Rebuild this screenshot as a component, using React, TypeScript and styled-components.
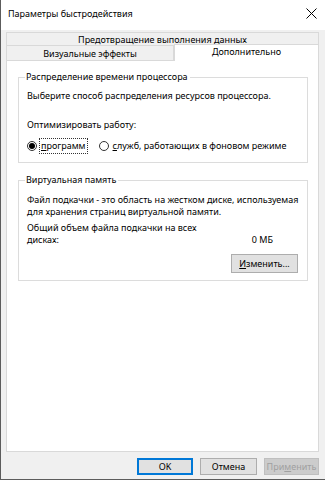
import React from "react";
import styled, { createGlobalStyle } from "styled-components";

const Global = createGlobalStyle`
  html, body { margin: 0; padding: 0; background: #f0f0f0; }
  body { font-family: "Noto Sans", sans-serif; font-size: 9px; color: #000; }
  * { box-sizing: border-box; }
`;

const Window = styled.div`
  width: 325px;
  height: 480px;
  background: #f0f0f0;
  border-left: 1px solid #5c5c5c;
  border-bottom: 1px solid #5c5c5c;
  display: flex;
  flex-direction: column;
  overflow: hidden;
`;

const TitleBar = styled.div`
  height: 30px;
  background: #fff;
  display: flex;
  align-items: center;
  justify-content: space-between;
  padding: 0 8px 4px 7px;
  font-size: 9px;
`;

const Body = styled.div`
  flex: 1;
  display: flex;
  flex-direction: column;
  padding: 2px 6px 0 5px;
`;

const TabTopRow = styled.div`
  height: 13px;
  border: 1px solid #d9d9d9;
  border-bottom: none;
  display: flex;
  align-items: center;
  justify-content: center;
  background: #f0f0f0;
  line-height: 1;
`;

const TabRow = styled.div`
  display: flex;
  height: 16px;
`;

const Tab = styled.div<{ $active?: boolean; $w: number }>`
  width: ${(p) => p.$w}px;
  border: 1px solid #d9d9d9;
  border-bottom: ${(p) => (p.$active ? "none" : "1px solid #d9d9d9")};
  background: ${(p) => (p.$active ? "#fff" : "#f0f0f0")};
  display: flex;
  align-items: center;
  justify-content: center;
  padding-bottom: ${(p) => (p.$active ? "3px" : "0")};
  margin-top: ${(p) => (p.$active ? "-1px" : "0")};
  height: ${(p) => (p.$active ? "17px" : "16px")};
  flex: ${(p) => (p.$active ? "1" : "none")};
  position: relative;
  z-index: ${(p) => (p.$active ? 1 : 0)};
`;

const Panel = styled.div`
  height: 391px;
  background: #fff;
  border: 1px solid #d9d9d9;
  border-top: none;
  padding: 10px 10px 0 11px;
  display: flex;
  flex-direction: column;
  gap: 11px;
  min-width: 0;
`;

const Group = styled.fieldset<{ $h: number }>`
  margin: 0;
  min-width: 0;
  border: 1px solid #dcdcdc;
  padding: 3px 8px 0 8px;
  height: ${(p) => p.$h}px;
  display: flex;
  flex-direction: column;
`;

const Legend = styled.legend`
  padding: 0 2px 0 1px;
  margin-left: -2px;
  line-height: 12px;
`;

const Text = styled.div<{ $mt?: number }>`
  margin-top: ${(p) => p.$mt ?? 0}px;
  line-height: 12px;
  white-space: nowrap;
`;

const RadioRow = styled.div`
  margin-top: 7px;
  display: flex;
  align-items: center;
  height: 15px;
`;

const RadioItem = styled.label<{ $ml?: number }>`
  display: flex;
  align-items: center;
  margin-left: ${(p) => p.$ml ?? 0}px;
`;

const RadioCircle = styled.span<{ $checked?: boolean }>`
  width: 10px;
  height: 10px;
  border-radius: 50%;
  border: 1px solid #333;
  display: flex;
  align-items: center;
  justify-content: center;
  margin-right: 3px;
  &::after {
    content: "";
    width: 6px;
    height: 6px;
    border-radius: 50%;
    background: ${(p) => (p.$checked ? "#000" : "transparent")};
  }
`;

const RadioLabel = styled.span<{ $focus?: boolean }>`
  outline: ${(p) => (p.$focus ? "1px dotted #333" : "none")};
  padding: 1px 1px;
  line-height: 12px;
  white-space: nowrap;
`;

const U = styled.span`
  text-decoration: underline;
`;

const SizeRow = styled.div`
  display: flex;
  justify-content: space-between;
  padding-right: 26px;
  line-height: 12px;
`;

const ButtonRight = styled.div`
  display: flex;
  justify-content: flex-end;
  margin-top: 8px;
  padding-right: 1px;
`;

const Button = styled.div<{ $w: number; $h?: number; $primary?: boolean; $disabled?: boolean }>`
  width: ${(p) => p.$w}px;
  height: ${(p) => p.$h ?? 18}px;
  display: flex;
  align-items: center;
  justify-content: center;
  background: ${(p) => (p.$disabled ? "#cccccc" : "#e1e1e1")};
  border: 1px solid ${(p) => (p.$primary ? "#0078d7" : p.$disabled ? "#bfbfbf" : "#adadad")};
  box-shadow: ${(p) => (p.$primary ? "inset 0 0 0 1px #0078d7" : "none")};
  color: ${(p) => (p.$disabled ? "#a0a0a0" : "#000")};
  line-height: 1;
`;

const Footer = styled.div`
  display: flex;
  justify-content: flex-end;
  gap: 7px;
  margin-top: 6px;
`;

const CloseIcon = () => (
  <svg width="11" height="11" viewBox="0 0 11 11">
    <path d="M0.5 0.5 L10.5 10.5 M10.5 0.5 L0.5 10.5" stroke="#000" strokeWidth="1" fill="none" />
  </svg>
);

export default function App() {
  return (
    <>
      <Global />
      <Window>
        <TitleBar>
          <span>Параметры быстродействия</span>
          <CloseIcon />
        </TitleBar>
        <Body>
          <TabTopRow>Предотвращение выполнения данных</TabTopRow>
          <TabRow>
            <Tab $w={168}>Визуальные эффекты</Tab>
            <Tab $w={145} $active>
              Дополнительно
            </Tab>
          </TabRow>
          <Panel>
            <Group $h={92}>
              <Legend>Распределение времени процессора</Legend>
              <Text $mt={4}>Выберите способ распределения ресурсов процессора.</Text>
              <Text $mt={17}>Оптимизировать работу:</Text>
              <RadioRow>
                <RadioItem>
                  <RadioCircle $checked />
                  <RadioLabel $focus>
                    <U>п</U>рограмм
                  </RadioLabel>
                </RadioItem>
                <RadioItem $ml={12}>
                  <RadioCircle />
                  <RadioLabel>
                    <U>с</U>лужб, работающих в фоновом режиме
                  </RadioLabel>
                </RadioItem>
              </RadioRow>
            </Group>
            <Group $h={107}>
              <Legend>Виртуальная память</Legend>
              <Text $mt={5}>Файл подкачки - это область на жестком диске, используемая</Text>
              <Text>для хранения страниц виртуальной памяти.</Text>
              <Text $mt={4}>Общий объем файла подкачки на всех</Text>
              <SizeRow>
                <span>дисках:</span>
                <span>0 МБ</span>
              </SizeRow>
              <ButtonRight>
                <Button $w={67} $h={19}>
                  <U>И</U>зменить...
                </Button>
              </ButtonRight>
            </Group>
          </Panel>
          <Footer>
            <Button $w={56} $h={17} $primary>
              OK
            </Button>
            <Button $w={57} $h={17}>
              Отмена
            </Button>
            <Button $w={55} $h={17} $disabled>
              При<U>м</U>енить
            </Button>
          </Footer>
        </Body>
      </Window>
    </>
  );
}
